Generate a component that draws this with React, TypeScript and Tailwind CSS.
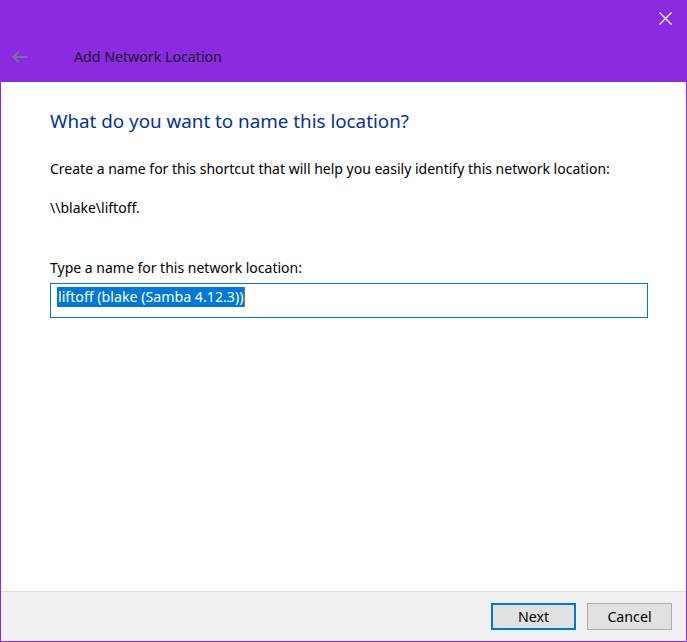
export default function App() {
  return (
    <div className="w-[687px] h-[642px] flex flex-col bg-white border-x border-b border-[#8a2be2] font-['Noto_Sans',sans-serif] text-black">
      <div className="h-[82px] bg-[#8a2be2] flex flex-col shrink-0">
        <div className="h-[46px] flex justify-end pt-[12px] pr-[14px]">
          <svg width="13" height="13" viewBox="0 0 13 13" className="block">
            <path d="M0.5 0.5 L12.5 12.5 M12.5 0.5 L0.5 12.5" stroke="#ffffff" strokeWidth="1.2" fill="none" />
          </svg>
        </div>
        <div className="h-[22px] flex items-center">
          <svg width="16" height="12" viewBox="0 0 16 12" className="ml-[11px] block">
            <path d="M1.5 6 H15.5 M6.5 1 L1.5 6 L6.5 11" stroke="#78728a" strokeWidth="2" fill="none" />
          </svg>
          <span className="ml-[46px] text-[14.2px] leading-[22px] text-[#1a1426]">Add Network Location</span>
        </div>
      </div>
      <div className="flex-1 flex flex-col pl-[49px] pr-[38px]">
        <div className="mt-[25px] text-[18.8px] leading-[28px] text-[#003399]">What do you want to name this location?</div>
        <div className="mt-[24px] text-[14px] leading-[20px] whitespace-nowrap">Create a name for this shortcut that will help you easily identify this network location:</div>
        <div className="mt-[19px] text-[14px] leading-[20px]">\\blake\liftoff.</div>
        <div className="mt-[40px] text-[14px] leading-[20px]">Type a name for this network location:</div>
        <div className="mt-[5px] h-[35px] border border-[#0078d7] pl-[6px] pt-[3px] flex items-start">
          <span className="bg-[#0078d7] text-white text-[14.2px] leading-[20px] px-px">liftoff (blake (Samba 4.12.3))</span>
          <span className="w-px h-[20px] bg-[#c06a1c]"></span>
        </div>
      </div>
      <div className="h-[50px] shrink-0 border-t border-[#dfdfdf] bg-[#f0f0f0] flex justify-end items-start pt-[11px] pr-[14px] gap-[11px]">
        <button className="w-[85px] h-[27px] border-2 border-[#0078d7] bg-[#e1e1e1] text-[14.2px] leading-[20px] flex items-center justify-center">Next</button>
        <button className="w-[85px] h-[27px] border border-[#adadad] bg-[#e1e1e1] text-[14.2px] leading-[20px] flex items-center justify-center">Cancel</button>
      </div>
    </div>
  );
}
